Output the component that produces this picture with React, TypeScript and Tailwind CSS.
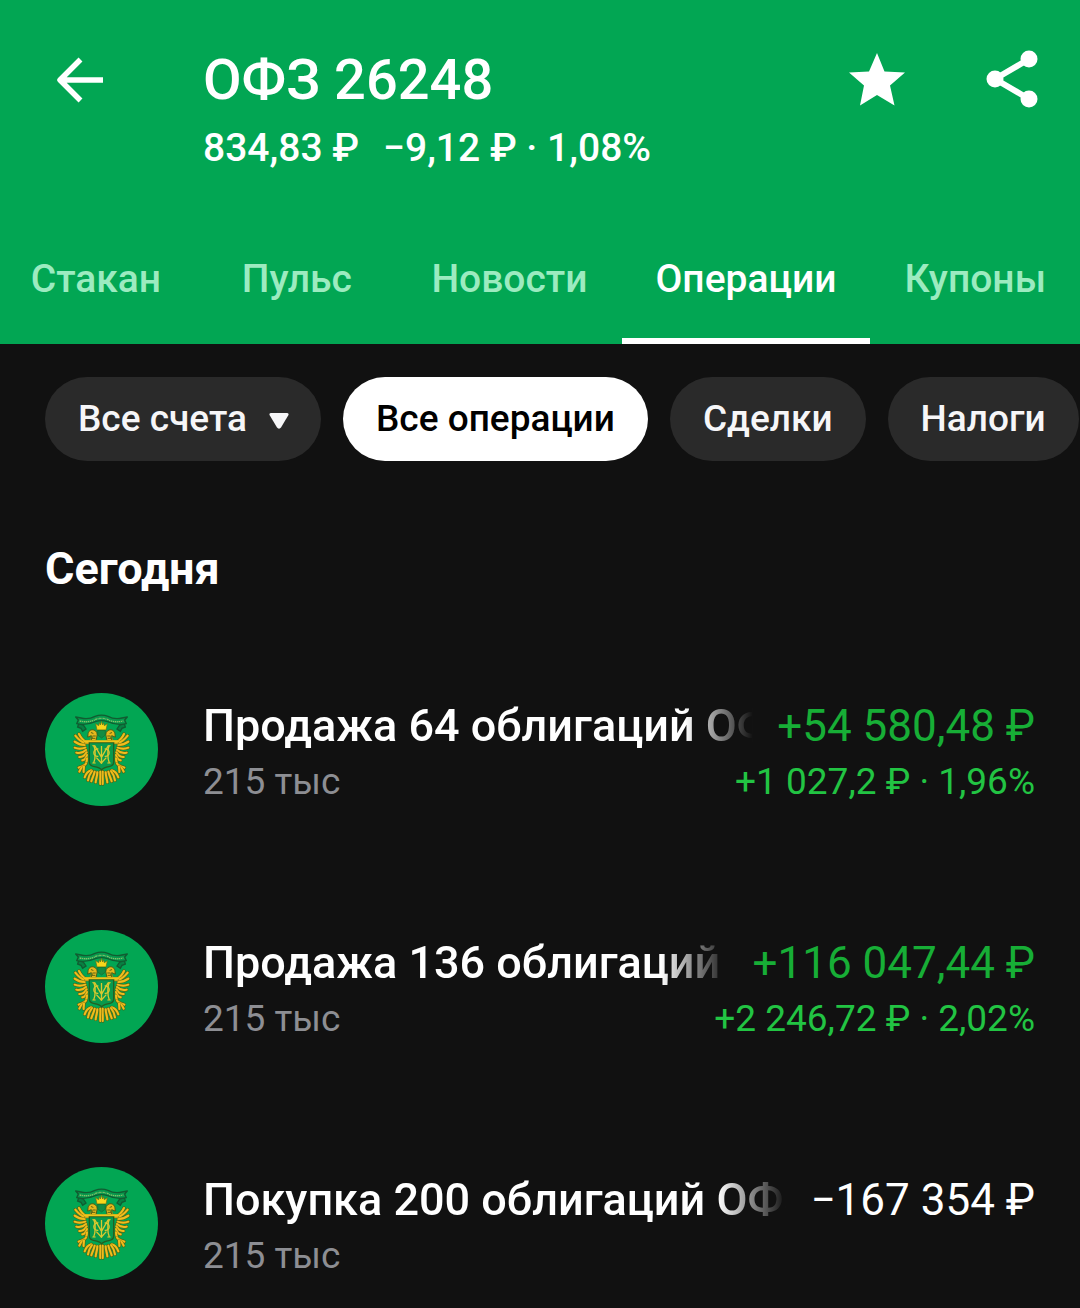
import { useState } from "react";

const tabs = ["Стакан", "Пульс", "Новости", "Операции", "Купоны"];
const filters = ["Все операции", "Сделки", "Налоги"];

interface Operation {
	id: number;
	title: string;
	account: string;
	amount: string;
	profit?: string;
}

const operations: Operation[] = [
	{
		id: 1,
		title: "Продажа 64 облигаций ОФЗ 26248",
		account: "215 тыс",
		amount: "+54 580,48 ₽",
		profit: "+1 027,2 ₽ · 1,96%",
	},
	{
		id: 2,
		title: "Продажа 136 облигаций ОФЗ 26248",
		account: "215 тыс",
		amount: "+116 047,44 ₽",
		profit: "+2 246,72 ₽ · 2,02%",
	},
	{
		id: 3,
		title: "Покупка 200 облигаций ОФЗ 26248",
		account: "215 тыс",
		amount: "−167 354 ₽",
	},
];

function BackIcon() {
	return (
		<svg viewBox="0 0 48 48" className="size-12" fill="none" stroke="currentColor" strokeWidth="5.500">
			<path d="M24.500 3.500 4 24l20.500 20.500M4 24h43" strokeLinejoin="round" />
		</svg>
	);
}

function StarIcon() {
	return (
		<svg viewBox="0 0 56 54" className="h-[54px] w-14" fill="currentColor">
			<path d="M28 1 35.500 19.500 56 20.500 41 33.500 45.500 53.500 28 43 11 53.500 15 33.500 0 20.500 20 19.500Z" />
		</svg>
	);
}

function ShareIcon() {
	return (
		<svg viewBox="0 0 52 58" className="h-[58px] w-[52px]" fill="currentColor">
			<path d="M43 9 9 29l34 20" fill="none" stroke="currentColor" strokeWidth="6" />
			<circle cx="43" cy="9" r="8.500" />
			<circle cx="9" cy="29" r="8.500" />
			<circle cx="43" cy="49" r="8.500" />
		</svg>
	);
}

const feathers = [
	"M170 186C158 180 152 172 147 161",
	"M164 188C152 184 144 176 136 166",
	"M164 194C152 194 142 190 134 184",
	"M166 202C154 206 144 206 134 202",
	"M168 209C158 218 148 220 139 217",
	"M170 216C164 226 157 231 148 230",
	"M171 224C168 234 163 239 157 240",
	"M171 234C171 240 170 244 168 248",
];

const legs = [
	"M168 250C164 258 154 258 146 262",
	"M160 256C154 262 150 268 148 274",
	"M162 258C162 266 160 270 161 275",
];

const tail = [
	"M184 270C176 272 168 280 164 291",
	"M186 272C180 280 175 288 174 300",
	"M194 274C192 284 187 292 184 303",
	"M202 276C202 286 198 296 197 306",
	"M211 274C212 286 210 300 211 311",
];

// Left half of the eagle, mirrored for the right one
function EagleHalf() {
	const lines = [...feathers, ...legs, ...tail];

	return (
		<g strokeLinecap="round" strokeLinejoin="round">
			<g fill="none" stroke="#3d681b" strokeWidth="10">
				{lines.map((d) => (
					<path key={d} d={d} />
				))}
			</g>
			{lines.map((d) => (
				<g key={d} fill="none">
					<path d={d} stroke="#7d7614" strokeWidth="8" />
					<path d={d} stroke="#f0bd1c" strokeWidth="6" />
				</g>
			))}
			<path d="M184 182v-14l-4 12-16 1v10h14Z" fill="#e6b71c" stroke="#7d7614" strokeWidth="2" />
			<path
				d="M174 162c0-10 9-16 18-13 8 3 11 11 9 18l-3 14h-16c5-6 6-12 2-15l-10 4Z"
				fill="#e6b71c"
				stroke="#4c5f14"
				strokeWidth="3"
			/>
			<path d="m184 157 5 2m0 8h7m-9 7h8" fill="none" stroke="#5d6514" strokeWidth="3" />
		</g>
	);
}

function EmblemIcon() {
	return (
		<svg viewBox="45 38 339 339" className="size-[113px] shrink-0" aria-hidden="true">
			<circle cx="214.500" cy="207.500" r="169.500" fill="#02a653" />
			<g transform="matrix(-1 0 0 1 429 0)">
				<EagleHalf />
			</g>
			<EagleHalf />
			<path
				d="m146 130 14 4 8 12-10 7-5-9-10-4Zm137 0-14 4-8 12 10 7 5-9 10-4Z"
				fill="#087f42"
				stroke="#115c31"
				strokeWidth="4"
			/>
			<path
				d="m137 110 16 3c16 4 29 2 42-5 13-5 26-5 39 0 13 7 26 9 42 5l16-3-8 9 5 11c-18 4-38 2-56-6-12-4-25-4-37 0-18 8-38 10-56 6l5-11Z"
				fill="#07984c"
				stroke="#115c31"
				strokeWidth="4"
				strokeLinejoin="round"
			/>
			<path
				d="M149 122c18 4 34 3 48-5 12-4 23-4 35 0 14 8 30 9 48 5"
				fill="none"
				stroke="#86c069"
				strokeWidth="4"
				strokeDasharray="5 2 3 2"
			/>
			<path
				d="m197 130 9 6 2-9 3 7 3.500-11 3.500 11 3-7 2 9 9-6-4 19h-27Z"
				fill="#f7d61c"
				stroke="#6c6f12"
				strokeWidth="2"
			/>
			<path d="M203 150h23v14l-11 9-12-9Z" fill="#138c43" stroke="#1a6a2e" strokeWidth="2" />
			<path
				d="M178 187h73v58c0 8-5 12-14 14-10 2-17 4-22 9-5-5-12-7-22-9-10-2-15-6-15-14Z"
				fill="#08994c"
				stroke="#245f20"
				strokeWidth="4"
			/>
			<path d="M164 183h101" stroke="#f0c51b" strokeWidth="6" strokeLinecap="round" />
			<g fill="none" stroke="#d9c92f" strokeWidth="4">
				<path d="M191 196c6 10 6 40 0 52m47-52c-6 10-6 40 0 52M195 197l19.500 34 19.500-34M214.500 197v53" />
				<path d="M205 206c-18-2-18 24 0 22m19-22c18-2 18 24 0 22M199 232l15 16 15-16" />
				<path d="M187 196h9m37 0h9m-55 52h10m35 0h10" strokeWidth="3" />
			</g>
		</svg>
	);
}

function OperationRow({ title, account, amount, profit }: Operation) {
	return (
		<li className="flex gap-[45px]">
			<EmblemIcon />
			<div className="min-w-0 flex-1 pt-[3px]">
				<div className="flex gap-6 leading-[60px]">
					<p className="min-w-0 flex-1 overflow-hidden text-[45px] font-medium whitespace-nowrap [mask-image:linear-gradient(to_right,black_calc(100%-68px),transparent)]">
						{title}
					</p>
					<p className={`text-[44px] whitespace-nowrap ${profit ? "text-[#17ae36]" : "text-white"}`}>
						{amount}
					</p>
				</div>
				<div className="flex justify-between text-[37px] leading-[52px]">
					<p className="text-[#8d8e93]">{account}</p>
					{profit && <p className="text-[#22c443]">{profit}</p>}
				</div>
			</div>
		</li>
	);
}

export default function App() {
	const [activeTab, setActiveTab] = useState("Операции");
	const [activeFilter, setActiveFilter] = useState("Все операции");

	return (
		<div className="min-h-screen overflow-hidden bg-[#111111] font-[Roboto,sans-serif] text-white">
			<header className="bg-[#02a653]">
				<div className="flex items-start pt-[46px] pr-[42px] pl-14">
					<button type="button" aria-label="Назад" className="mt-[10px] mr-[99px]">
						<BackIcon />
					</button>
					<div className="flex-1 font-medium">
						<h1 className="text-[56px] leading-[68px]">ОФЗ 26248</h1>
						<p className="flex gap-6 text-[39px] leading-[68px]">
							<span>834,83 ₽</span>
							<span>−9,12 ₽ · 1,08%</span>
						</p>
					</div>
					<div className="flex items-center gap-[81px] pt-[4px]">
						<button type="button" aria-label="В избранном">
							<StarIcon />
						</button>
						<button type="button" aria-label="Поделиться">
							<ShareIcon />
						</button>
					</div>
				</div>
				<nav className="mt-[32px] flex justify-end overflow-hidden">
					{tabs.map((tab) => (
						<button
							key={tab}
							type="button"
							onClick={() => setActiveTab(tab)}
							className={`h-[130px] min-w-[201px] shrink-0 border-b-[6px] px-[34px] pt-[6px] text-[39px] font-medium ${
								activeTab === tab ? "border-white text-white" : "border-transparent text-[#9cebc0]"
							}`}
						>
							{tab}
						</button>
					))}
				</nav>
			</header>

			<main>
				<div className="flex gap-[22px] overflow-hidden pt-[33px] pl-[45px] text-[37px] font-medium">
					<label className="relative shrink-0">
						<select
							aria-label="Счета"
							className="h-[84px] appearance-none rounded-full bg-[#2a2a2a] pr-[74px] pl-[33px] text-[#f6f6f8]"
						>
							<option>Все счета</option>
						</select>
						<svg
							viewBox="0 0 20 17"
							className="pointer-events-none absolute top-[35px] right-8 h-[17px] w-5"
							fill="#f6f6f8"
						>
							<path d="M2 1h16c1.500 0 2 1 1.300 2.300L12 15.500c-1 1.500-3 1.500-4 0L.700 3.300C0 2 .500 1 2 1Z" />
						</svg>
					</label>
					{filters.map((filter) => (
						<button
							key={filter}
							type="button"
							onClick={() => setActiveFilter(filter)}
							className={`h-[84px] shrink-0 rounded-full px-[33px] ${
								activeFilter === filter ? "bg-white text-black" : "bg-[#2a2a2a] text-[#f6f6f8]"
							}`}
						>
							{filter}
						</button>
					))}
				</div>

				<section className="px-[45px] pt-[78px]">
					<h2 className="text-[45px] leading-[60px] font-bold">Сегодня</h2>
					<ul className="flex flex-col gap-[122px] pt-[94px]">
						{operations.map((operation) => (
							<OperationRow key={operation.id} {...operation} />
						))}
					</ul>
				</section>
			</main>
		</div>
	);
}
